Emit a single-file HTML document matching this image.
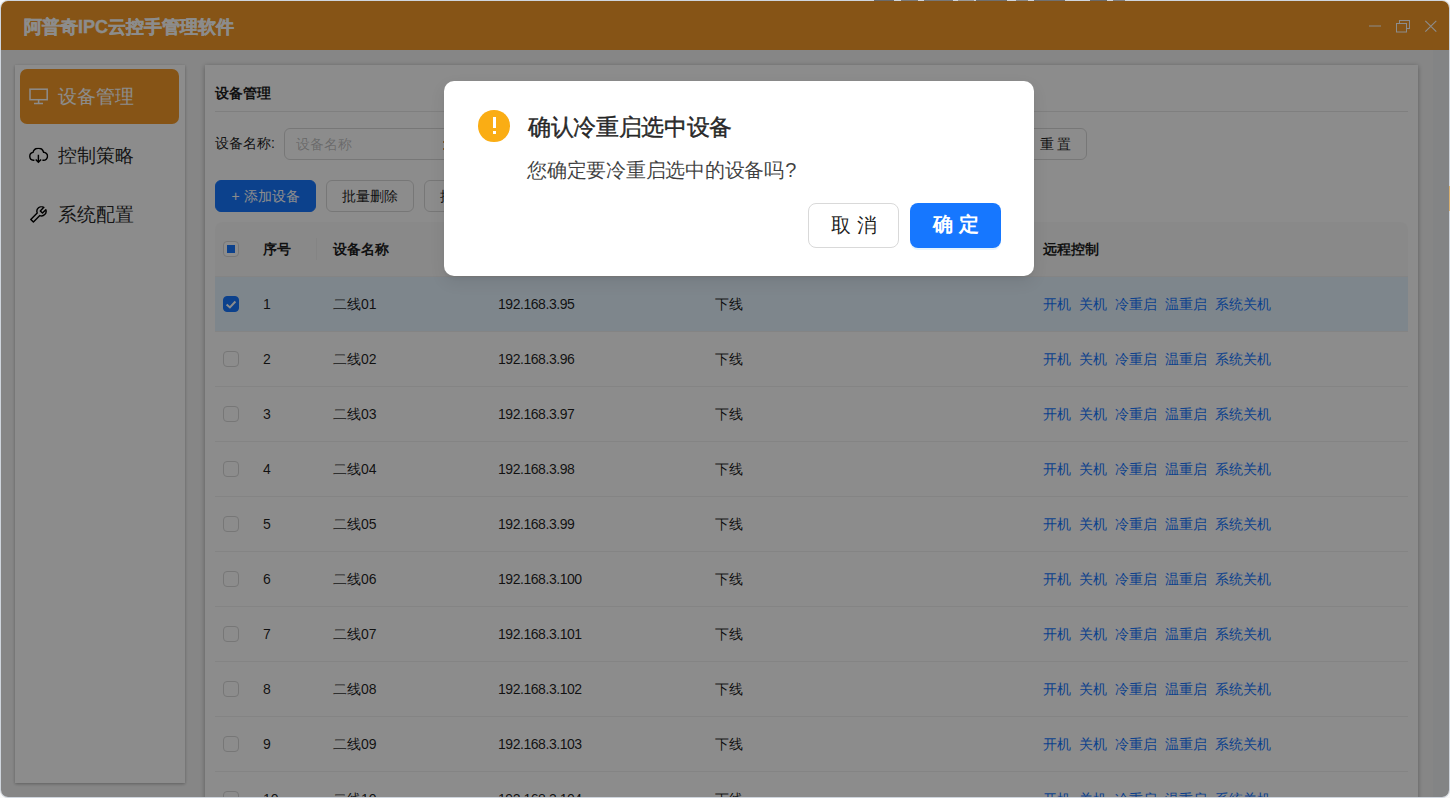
<!DOCTYPE html>
<html><head><meta charset="utf-8">
<style>
*{box-sizing:border-box;margin:0;padding:0}
html,body{width:1450px;height:798px;overflow:hidden;background:#fafafa;font-family:"Liberation Sans",sans-serif;color:rgba(0,0,0,.88)}
.abs{position:absolute}
#topjunk{position:absolute;left:873px;top:0;width:260px;height:1px;background:linear-gradient(90deg,transparent 1px,#6a6a6a 1px,#6a6a6a 21px,transparent 21px,transparent 28px,#7a7a7a 28px,#7a7a7a 45px,transparent 45px,transparent 51px,#777 51px,#777 80px,transparent 80px,transparent 85px,#999 85px,#999 101px,transparent 101px,transparent 103px,#6f6f6f 103px,#6f6f6f 134px,transparent 134px,transparent 143px,#888 143px,#888 155px,transparent 155px,transparent 161px,#707070 161px,#707070 192px,transparent 192px,transparent 217px,#6a6a6a 217px,#6a6a6a 234px,transparent 234px,transparent 240px,#808080 240px,#808080 252px,transparent 252px)}
#frame{position:absolute;left:0;top:0;width:1450px;height:798px;border-radius:8px;box-shadow:inset 0 0 0 1px #cfd5dd}
#win{position:absolute;left:0;top:0;width:1449px;height:797px;clip-path:inset(1px 0 0 1px round 7px);background:#f5f5f5}
#rightjunk{position:absolute;left:1449px;top:186px;width:1px;height:25px;background:#d9b070}
#title{position:absolute;left:0;top:0;width:100%;height:50px;background:#f59a28}
#title .t{position:absolute;left:24px;top:16px;font-size:18px;font-weight:bold;color:#fff;-webkit-text-stroke:0.35px #fff;white-space:nowrap;line-height:22px}
#side{position:absolute;left:15px;top:65px;width:170px;height:718px;background:#fff;box-shadow:0 1px 3px rgba(0,0,0,.3)}
.mi{position:absolute;left:5px;width:159px;height:55px;border-radius:7px;font-size:19px;color:rgba(0,0,0,.85)}
.mi .tx{position:absolute;left:38px;top:15px;white-space:nowrap;line-height:26px}
.mi svg{position:absolute}
.mi.act{background:#f59a28;color:#fff}
#main{position:absolute;left:205px;top:65px;width:1213px;height:760px;background:#fff;box-shadow:0 1px 5px rgba(0,0,0,.32)}
#scroll{position:absolute;left:1433px;top:50px;width:16px;height:747px;background:#eef0f3}
.hd{position:absolute;left:11px;top:18px;font-size:14px;font-weight:bold;line-height:20px;white-space:nowrap}
.hr{position:absolute;left:11px;top:46px;width:1193px;height:1px;background:#e8e8e8}
.lbl{position:absolute;font-size:14px;line-height:20px;white-space:nowrap}
.inp{position:absolute;border:1px solid #d9d9d9;border-radius:6px;height:32px;background:#fff}
.inp .ph{position:absolute;left:11px;top:5px;font-size:14px;line-height:20px;color:rgba(0,0,0,.25);white-space:nowrap}
.btn{position:absolute;height:32px;border:1px solid #d9d9d9;border-radius:6px;background:#fff;font-size:14px;line-height:30px;text-align:center;white-space:nowrap}
.btn.pri{background:#1677ff;border-color:#1677ff;color:#fff}
#table{position:absolute;left:11px;top:157px;width:1193px;height:620px}
.thead{position:absolute;left:0;top:0;width:1193px;height:55px;background:#fafafa;border-radius:8px 8px 0 0;border-bottom:1px solid #f0f0f0}
.th{position:absolute;top:17px;font-size:14px;font-weight:bold;line-height:20px;white-space:nowrap}
.sep{position:absolute;top:16px;width:1px;height:22px;background:#f0f0f0}
.row{position:absolute;left:0;width:1193px;height:55px;border-bottom:1px solid #f0f0f0;background:#fff}
.row.sel{background:#e6f4ff}
.row .c{position:absolute;top:17px;font-size:14px;line-height:20px;white-space:nowrap}
.lk span{color:#1677ff;margin-right:8px}
.cb{position:absolute;width:16px;height:16px;border:1px solid #d9d9d9;border-radius:4px;background:#fff}
.cb.on{background:#1677ff;border-color:#1677ff}
.cb svg{position:absolute;left:-1px;top:-1px}
#overlay{position:absolute;left:0;top:0;width:1450px;height:798px;background:rgba(0,0,0,.45)}
#dlg{position:absolute;left:444px;top:81px;width:590px;height:195px;background:#fff;border-radius:10px;box-shadow:0 6px 16px 0 rgba(0,0,0,.08),0 3px 6px -4px rgba(0,0,0,.12)}
#dlg .ic{position:absolute;left:34.3px;top:29px;width:31.5px;height:31.5px;border-radius:50%;background:#faad14}
#dlg .ti{position:absolute;left:84px;top:31px;font-size:23px;letter-spacing:-0.35px;font-weight:normal;color:rgba(0,0,0,.82);-webkit-text-stroke:0.45px rgba(0,0,0,.82);line-height:30px;white-space:nowrap}
#dlg .bd{position:absolute;left:83px;top:75px;font-size:20px;letter-spacing:-0.25px;color:rgba(0,0,0,.75);line-height:28px;white-space:nowrap}
#dlg .b{position:absolute;top:122px;height:45px;border-radius:8px;font-size:19.5px;line-height:43px;text-align:center;white-space:nowrap}
</style></head><body>
<div id="frame"></div>
<div id="topjunk"></div>
<div id="rightjunk"></div>
<div id="win">
 <div id="title"><div class="t">阿普奇IPC云控手管理软件</div>
  <svg class="abs" style="left:1360px;top:10px" width="88" height="32" viewBox="1360 10 88 32">
   <line x1="1369" y1="26" x2="1381" y2="26" stroke="#fff" stroke-width="1"/>
   <rect x="1399.5" y="20.5" width="10" height="8" fill="none" stroke="#fff" stroke-width="1"/>
   <rect x="1396.5" y="23.5" width="10" height="8.5" fill="#f59a28" stroke="#fff" stroke-width="1"/>
   <path d="M1425.3 20.8 L1436.3 31.6 M1436.3 20.8 L1425.3 31.6" stroke="#fff" stroke-width="1.1"/>
  </svg>
 </div>
 <div id="scroll"></div>
 <div id="side">
  <div class="mi act" style="top:4px">
   <svg style="left:9px;top:18px" width="20" height="18" viewBox="0 0 20 18"><rect x="1" y="2.2" width="17.2" height="10.5" fill="none" stroke="#fff" stroke-width="1.5"/><path d="M9.6 12.9 V16.6 M5 16.6 H14" stroke="#fff" stroke-width="1.5"/></svg>
   <div class="tx">设备管理</div></div>
  <div class="mi" style="top:63px">
   <svg style="left:9px;top:20px;transform:translate(-0.6px,-0.2px)" width="20" height="16" viewBox="0 0 20 16"><path d="M6 12.5 H5 A4 4 0 0 1 4.6 4.6 A5.5 5.5 0 0 1 15.2 4.4 A4 4 0 0 1 15 12.5 H14" fill="none" stroke="#000" stroke-width="1.45"/><path d="M10 7 V14.5 M7.3 11.8 L10 14.5 L12.7 11.8" fill="none" stroke="#000" stroke-width="1.45"/></svg>
   <div class="tx">控制策略</div></div>
  <div class="mi" style="top:122px">
   <svg style="left:10px;top:18px;transform:translate(0px,1.3px)" width="19" height="19" viewBox="0 0 19 19"><path d="M0.79 13.10 L7.21 6.67 A4.6 4.6 0 0 1 13.86 1.05 L10.30 4.60 L12.50 6.80 L15.83 3.46 A4.6 4.6 0 0 1 9.83 9.29 L3.40 15.71 Z" fill="none" stroke="#000" stroke-width="1.45" stroke-linejoin="round"/></svg>
   <div class="tx">系统配置</div></div>
 </div>
 <div id="main"><div style="position:absolute;left:-1px;top:0">
  <div class="hd">设备管理</div>
  <div class="hr"></div>
  <div class="lbl" style="left:11px;top:68px">设备名称:</div>
  <div class="inp" style="left:80px;top:63px;width:240px"><div class="ph">设备名称</div></div>
  <div style="position:absolute;left:239px;top:76px;width:1px;height:2px;background:#e0a050"></div><div style="position:absolute;left:239px;top:83px;width:1px;height:2px;background:#e0a050"></div>
  <div class="btn" style="left:820px;top:63px;width:63px">重 置</div>
  <div class="btn pri" style="left:11px;top:115px;width:101px">+ 添加设备</div>
  <div class="btn" style="left:122px;top:115px;width:88px">批量删除</div>
  <div class="btn" style="left:220px;top:115px;width:88px">批量导入</div>
  <div id="table">
   <div class="thead">
    <div class="cb" style="left:8px;top:19px"><div style="position:absolute;left:3px;top:3px;width:8px;height:8px;background:#1677ff"></div></div>
    <div class="th" style="left:48px">序号</div>
    <div class="sep" style="left:101px"></div>
    <div class="th" style="left:118px">设备名称</div>
    <div class="th" style="left:283px">IP地址</div>
    <div class="th" style="left:500px">状态</div>
    <div class="th" style="left:828px">远程控制</div>
   </div>
<div class="row sel" style="top:55px">
<div class="cb on" style="left:8px;top:19px"><svg width="16" height="16" viewBox="0 0 16 16"><path d="M3.6 8.4 L6.9 11.4 L12.4 5.5" fill="none" stroke="#fff" stroke-width="2"/></svg></div>
<div class="c" style="left:48px">1</div>
<div class="c" style="left:118px">二线01</div>
<div class="c" style="left:283px;letter-spacing:-0.45px">192.168.3.95</div>
<div class="c" style="left:500px">下线</div>
<div class="c lk" style="left:828px"><span>开机</span><span>关机</span><span>冷重启</span><span>温重启</span><span>系统关机</span></div>
</div>
<div class="row" style="top:110px">
<div class="cb" style="left:8px;top:19px"></div>
<div class="c" style="left:48px">2</div>
<div class="c" style="left:118px">二线02</div>
<div class="c" style="left:283px;letter-spacing:-0.45px">192.168.3.96</div>
<div class="c" style="left:500px">下线</div>
<div class="c lk" style="left:828px"><span>开机</span><span>关机</span><span>冷重启</span><span>温重启</span><span>系统关机</span></div>
</div>
<div class="row" style="top:165px">
<div class="cb" style="left:8px;top:19px"></div>
<div class="c" style="left:48px">3</div>
<div class="c" style="left:118px">二线03</div>
<div class="c" style="left:283px;letter-spacing:-0.45px">192.168.3.97</div>
<div class="c" style="left:500px">下线</div>
<div class="c lk" style="left:828px"><span>开机</span><span>关机</span><span>冷重启</span><span>温重启</span><span>系统关机</span></div>
</div>
<div class="row" style="top:220px">
<div class="cb" style="left:8px;top:19px"></div>
<div class="c" style="left:48px">4</div>
<div class="c" style="left:118px">二线04</div>
<div class="c" style="left:283px;letter-spacing:-0.45px">192.168.3.98</div>
<div class="c" style="left:500px">下线</div>
<div class="c lk" style="left:828px"><span>开机</span><span>关机</span><span>冷重启</span><span>温重启</span><span>系统关机</span></div>
</div>
<div class="row" style="top:275px">
<div class="cb" style="left:8px;top:19px"></div>
<div class="c" style="left:48px">5</div>
<div class="c" style="left:118px">二线05</div>
<div class="c" style="left:283px;letter-spacing:-0.45px">192.168.3.99</div>
<div class="c" style="left:500px">下线</div>
<div class="c lk" style="left:828px"><span>开机</span><span>关机</span><span>冷重启</span><span>温重启</span><span>系统关机</span></div>
</div>
<div class="row" style="top:330px">
<div class="cb" style="left:8px;top:19px"></div>
<div class="c" style="left:48px">6</div>
<div class="c" style="left:118px">二线06</div>
<div class="c" style="left:283px;letter-spacing:-0.45px">192.168.3.100</div>
<div class="c" style="left:500px">下线</div>
<div class="c lk" style="left:828px"><span>开机</span><span>关机</span><span>冷重启</span><span>温重启</span><span>系统关机</span></div>
</div>
<div class="row" style="top:385px">
<div class="cb" style="left:8px;top:19px"></div>
<div class="c" style="left:48px">7</div>
<div class="c" style="left:118px">二线07</div>
<div class="c" style="left:283px;letter-spacing:-0.45px">192.168.3.101</div>
<div class="c" style="left:500px">下线</div>
<div class="c lk" style="left:828px"><span>开机</span><span>关机</span><span>冷重启</span><span>温重启</span><span>系统关机</span></div>
</div>
<div class="row" style="top:440px">
<div class="cb" style="left:8px;top:19px"></div>
<div class="c" style="left:48px">8</div>
<div class="c" style="left:118px">二线08</div>
<div class="c" style="left:283px;letter-spacing:-0.45px">192.168.3.102</div>
<div class="c" style="left:500px">下线</div>
<div class="c lk" style="left:828px"><span>开机</span><span>关机</span><span>冷重启</span><span>温重启</span><span>系统关机</span></div>
</div>
<div class="row" style="top:495px">
<div class="cb" style="left:8px;top:19px"></div>
<div class="c" style="left:48px">9</div>
<div class="c" style="left:118px">二线09</div>
<div class="c" style="left:283px;letter-spacing:-0.45px">192.168.3.103</div>
<div class="c" style="left:500px">下线</div>
<div class="c lk" style="left:828px"><span>开机</span><span>关机</span><span>冷重启</span><span>温重启</span><span>系统关机</span></div>
</div>
<div class="row" style="top:550px">
<div class="cb" style="left:8px;top:19px"></div>
<div class="c" style="left:48px">10</div>
<div class="c" style="left:118px">二线10</div>
<div class="c" style="left:283px;letter-spacing:-0.45px">192.168.3.104</div>
<div class="c" style="left:500px">下线</div>
<div class="c lk" style="left:828px"><span>开机</span><span>关机</span><span>冷重启</span><span>温重启</span><span>系统关机</span></div>
</div>
  </div>
 </div></div>
<div id="overlay"></div>
</div>
<div id="dlg">
 <div class="ic"><div style="position:absolute;left:14.5px;top:7.3px;width:2.8px;height:11px;background:#fff"></div><div style="position:absolute;left:14.4px;top:21px;width:3px;height:2.6px;background:#fff"></div></div>
 <div class="ti">确认冷重启选中设备</div>
 <div class="bd">您确定要冷重启选中的设备吗<span style="margin-left:1.5px">?</span></div>
 <div class="b" style="left:364px;width:91px;border:1px solid #d9d9d9;letter-spacing:6px;text-indent:6px">取消</div>
 <div class="b" style="left:466px;width:91px;background:#1677ff;color:#fff;font-weight:bold;letter-spacing:6px;text-indent:6px;box-shadow:0 2px 0 rgba(5,145,255,.1)">确定</div>
</div>
</body></html>
